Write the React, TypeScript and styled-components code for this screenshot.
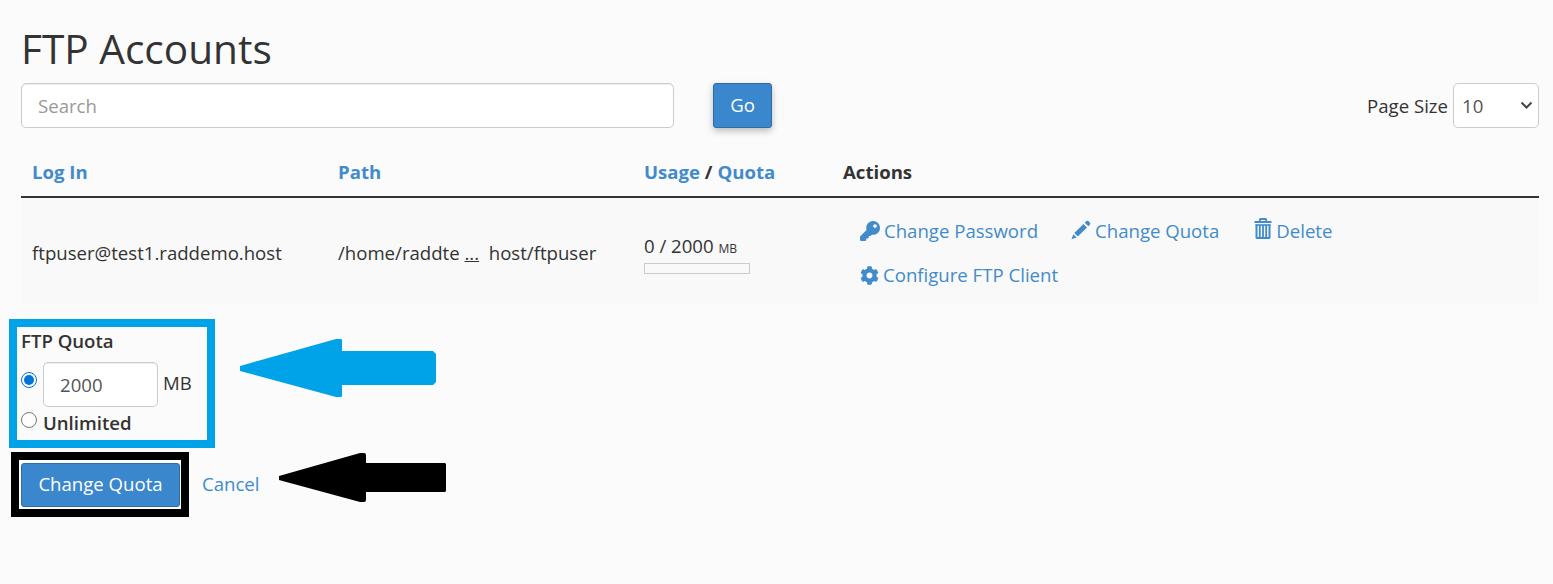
import React from "react";
import styled, { createGlobalStyle } from "styled-components";
import { FaCog, FaKey } from "react-icons/fa";

const GlobalStyle = createGlobalStyle`
  *, *::before, *::after { box-sizing: border-box; }
  body {
    margin: 0;
    background: #fbfbfb;
    color: #333;
    font-family: "Open Sans", "Noto Sans", sans-serif;
    font-size: 18.6px;
    line-height: 27px;
  }
`;

const Page = styled.main`
  min-height: 584px;
  padding: 21px 14px 0 21px;
`;

const Title = styled.h1`
  margin: 0;
  height: 62px;
  font-size: 40.6px;
  font-weight: 400;
  line-height: 56px;
`;

const Toolbar = styled.div`
  display: flex;
  align-items: center;
  height: 45px;
`;

const Field = styled.input<{ $width: number }>`
  width: ${(p) => p.$width}px;
  height: 45px;
  padding: 0 16px 1px;
  border: 1px solid #ccc;
  border-radius: 5px;
  background: #fff;
  box-shadow: inset 0 1px 1px rgba(0, 0, 0, 0.075);
  color: #555;
  font: inherit;
  outline: none;
  &::placeholder { color: #999; opacity: 1; }
`;

const Button = styled.button<{ $width: number; $height: number; $raised?: boolean }>`
  width: ${(p) => p.$width}px;
  height: ${(p) => p.$height}px;
  padding: 0 0 3px;
  border: 1px solid #2e6da4;
  border-radius: 3px;
  background: #3a87cd;
  color: #fff;
  font: inherit;
  box-shadow: ${(p) => (p.$raised ? "0 3px 7px rgba(0, 0, 0, 0.26)" : "none")};
`;

const GoSlot = styled.div`
  display: flex;
  margin-left: 39px;
`;

const PageSize = styled.label`
  display: flex;
  align-items: center;
  gap: 5px;
  margin-left: auto;
`;

const SizeText = styled.span`
  padding-bottom: 1px;
`;

const SelectBox = styled.span`
  display: flex;
  align-items: center;
  justify-content: space-between;
  width: 86px;
  height: 45px;
  padding: 0 5px 1px 8px;
  border: 1px solid #ccc;
  border-radius: 5px;
  background: #fff;
  color: #555;
`;

const Row = styled.div`
  display: grid;
  grid-template-columns: 306px 306px 199px 1fr;
`;

const HeadRow = styled(Row)`
  height: 70px;
  padding-top: 30px;
  border-bottom: 2px solid #333;
  font-weight: 700;
`;

const BodyRow = styled(Row)`
  height: 106px;
  align-items: center;
  background: #f9f9f9;
`;

const Cell = styled.div`
  padding-left: 11px;
  white-space: nowrap;
`;

const TextCell = styled(Cell)`
  padding-top: 2px;
`;

const Link = styled.a`
  color: #428bca;
  text-decoration: none;
`;

const UsageCell = styled(Cell)`
  padding-top: 4px;
`;

const Unit = styled.span`
  font-size: 12.1px;
`;

const Meter = styled.div`
  width: 106px;
  height: 11px;
  margin-top: 1px;
  border: 1px solid #ccc;
`;

const Actions = styled(Cell)`
  display: flex;
  flex-wrap: wrap;
  row-gap: 17px;
  align-self: start;
  padding-top: 19px;
  padding-left: 28px;
  width: 560px;
`;

const Action = styled(Link)<{ $gap?: number; $lift: number }>`
  display: flex;
  align-items: center;
  gap: 4px;
  margin-right: ${(p) => p.$gap ?? 0}px;
  svg {
    display: block;
    flex: none;
    margin-bottom: ${(p) => p.$lift}px;
  }
`;

const Annotated = styled.div<{ $top: number; $left: number }>`
  display: flex;
  align-items: flex-start;
  margin: ${(p) => p.$top}px 0 0 ${(p) => p.$left}px;
`;

const Frame = styled.div<{ $color: string; $width: number; $height: number }>`
  width: ${(p) => p.$width}px;
  height: ${(p) => p.$height}px;
  border: 8px solid ${(p) => p.$color};
`;

const QuotaForm = styled.div`
  padding-left: 4px;
`;

const QuotaTitle = styled.div`
  height: 35px;
  font-weight: 600;
`;

const Option = styled.label`
  display: flex;
  align-items: center;
`;

const UnlimitedOption = styled(Option)`
  margin-top: 2px;
  font-weight: 600;
`;

const Radio = styled.span<{ $checked?: boolean; $after: number; $lift: number }>`
  display: grid;
  place-items: center;
  width: 16px;
  height: 16px;
  margin: 0 ${(p) => p.$after}px ${(p) => p.$lift}px 0;
  border: 1px solid ${(p) => (p.$checked ? "#0075d7" : "#767676")};
  border-radius: 50%;
  background: #fff;
  &::after {
    content: "";
    width: 10px;
    height: 10px;
    border-radius: 50%;
    background: ${(p) => (p.$checked ? "#0075d7" : "transparent")};
  }
`;

const UnitLabel = styled.span`
  margin: 0 0 5px 5px;
`;

const SubmitPad = styled.div`
  display: flex;
  height: 100%;
  padding: 3px 0 0 2px;
  background: #fff;
`;

const Cancel = styled(Link)`
  margin: 18px 0 0 13px;
`;

const Arrow = styled.svg<{ $top: number; $left: number }>`
  display: block;
  margin: ${(p) => p.$top}px 0 0 ${(p) => p.$left}px;
`;

const PencilIcon = () => (
  <svg width="20" height="20" viewBox="0 0 20 20" fill="currentColor">
    <path d="M0.5 19.3 L2.3 14.2 L5.6 17.5 Z M3.3 13 L12.5 4 L16 7.4 L6.8 16.5 Z M13.8 2.7 L15.4 1.1 Q16.4 0.2 17.4 1.1 L19 2.7 Q19.9 3.7 19 4.6 L17.4 6.2 Z" />
  </svg>
);

const TrashIcon = () => (
  <svg width="18" height="22" viewBox="0 0 18 22" fill="none" stroke="currentColor">
    <path d="M0.5 4 H17.5" strokeWidth="2" />
    <path d="M5.8 4 V1.8 Q5.8 1 6.6 1 H11.4 Q12.2 1 12.2 1.8 V4" strokeWidth="1.8" />
    <path d="M2.5 6.5 V19.4 Q2.5 20.1 3.3 20.1 H14.7 Q15.5 20.1 15.5 19.4 V6.5" strokeWidth="2" />
    <path d="M1.5 7 H16.5" strokeWidth="1.6" />
    <path d="M5.8 7 V20 M9 7 V20 M12.2 7 V20" strokeWidth="1.8" />
  </svg>
);

const ChevronIcon = () => (
  <svg width="13" height="9" viewBox="0 0 13 9" fill="none" stroke="#444" strokeWidth="2">
    <path d="M1.5 1.5 L6.5 6.5 L11.5 1.5" />
  </svg>
);

export default function App() {
  return (
    <>
      <GlobalStyle />
      <Page>
        <Title>FTP Accounts</Title>
        <Toolbar>
          <Field $width={653} placeholder="Search" />
          <GoSlot>
            <Button $width={59} $height={45} $raised>Go</Button>
          </GoSlot>
          <PageSize>
            <SizeText>Page Size</SizeText>
            <SelectBox>10<ChevronIcon /></SelectBox>
          </PageSize>
        </Toolbar>

        <HeadRow>
          <Cell><Link>Log In</Link></Cell>
          <Cell><Link>Path</Link></Cell>
          <Cell><Link>Usage</Link> / <Link>Quota</Link></Cell>
          <Cell>Actions</Cell>
        </HeadRow>
        <BodyRow>
          <TextCell>ftpuser@test1.raddemo.host</TextCell>
          <TextCell>/home/raddte <u>...</u>&nbsp; host/ftpuser</TextCell>
          <UsageCell>
            0 / 2000 <Unit>MB</Unit>
            <Meter />
          </UsageCell>
          <Actions>
            <Action $gap={33} $lift={-1}><FaKey size={20} />Change Password</Action>
            <Action $gap={35} $lift={1}><PencilIcon />Change Quota</Action>
            <Action $lift={3}><TrashIcon />Delete</Action>
            <Action $lift={-1}><FaCog size={19} />Configure FTP Client</Action>
          </Actions>
        </BodyRow>

        <Annotated $top={15} $left={-12}>
          <Frame $color="#00a2e8" $width={206} $height={129}>
            <QuotaForm>
              <QuotaTitle>FTP Quota</QuotaTitle>
              <Option>
                <Radio $checked $after={6} $lift={9} />
                <Field $width={115} defaultValue="2000" />
                <UnitLabel>MB</UnitLabel>
              </Option>
              <UnlimitedOption><Radio $after={6} $lift={5} />Unlimited</UnlimitedOption>
            </QuotaForm>
          </Frame>
          <Arrow $top={19} $left={24} width="198" height="60" viewBox="0 0 198 60" fill="#00a2e8">
            <path d="M1 28 L97 1 H102 Q103 1 103 2 V13 H194 L197 16 V44 L194 47 H103 V58 Q103 59 102 59 H97 L1 33 Z" />
          </Arrow>
        </Annotated>
        <Annotated $top={4} $left={-10}>
          <Frame $color="#000" $width={178} $height={65}>
            <SubmitPad>
              <Button $width={159} $height={44}>Change Quota</Button>
            </SubmitPad>
          </Frame>
          <Cancel>Cancel</Cancel>
          <Arrow $top={0} $left={18} width="170" height="52" viewBox="0 0 170 52" fill="#000">
            <path d="M1 24 L82 1 H86 Q88 1 88 3 V11 H167 L168 12 V39 L167 40 H88 V48 Q88 50 86 50 H82 L1 28 Z" />
          </Arrow>
        </Annotated>
      </Page>
    </>
  );
}
